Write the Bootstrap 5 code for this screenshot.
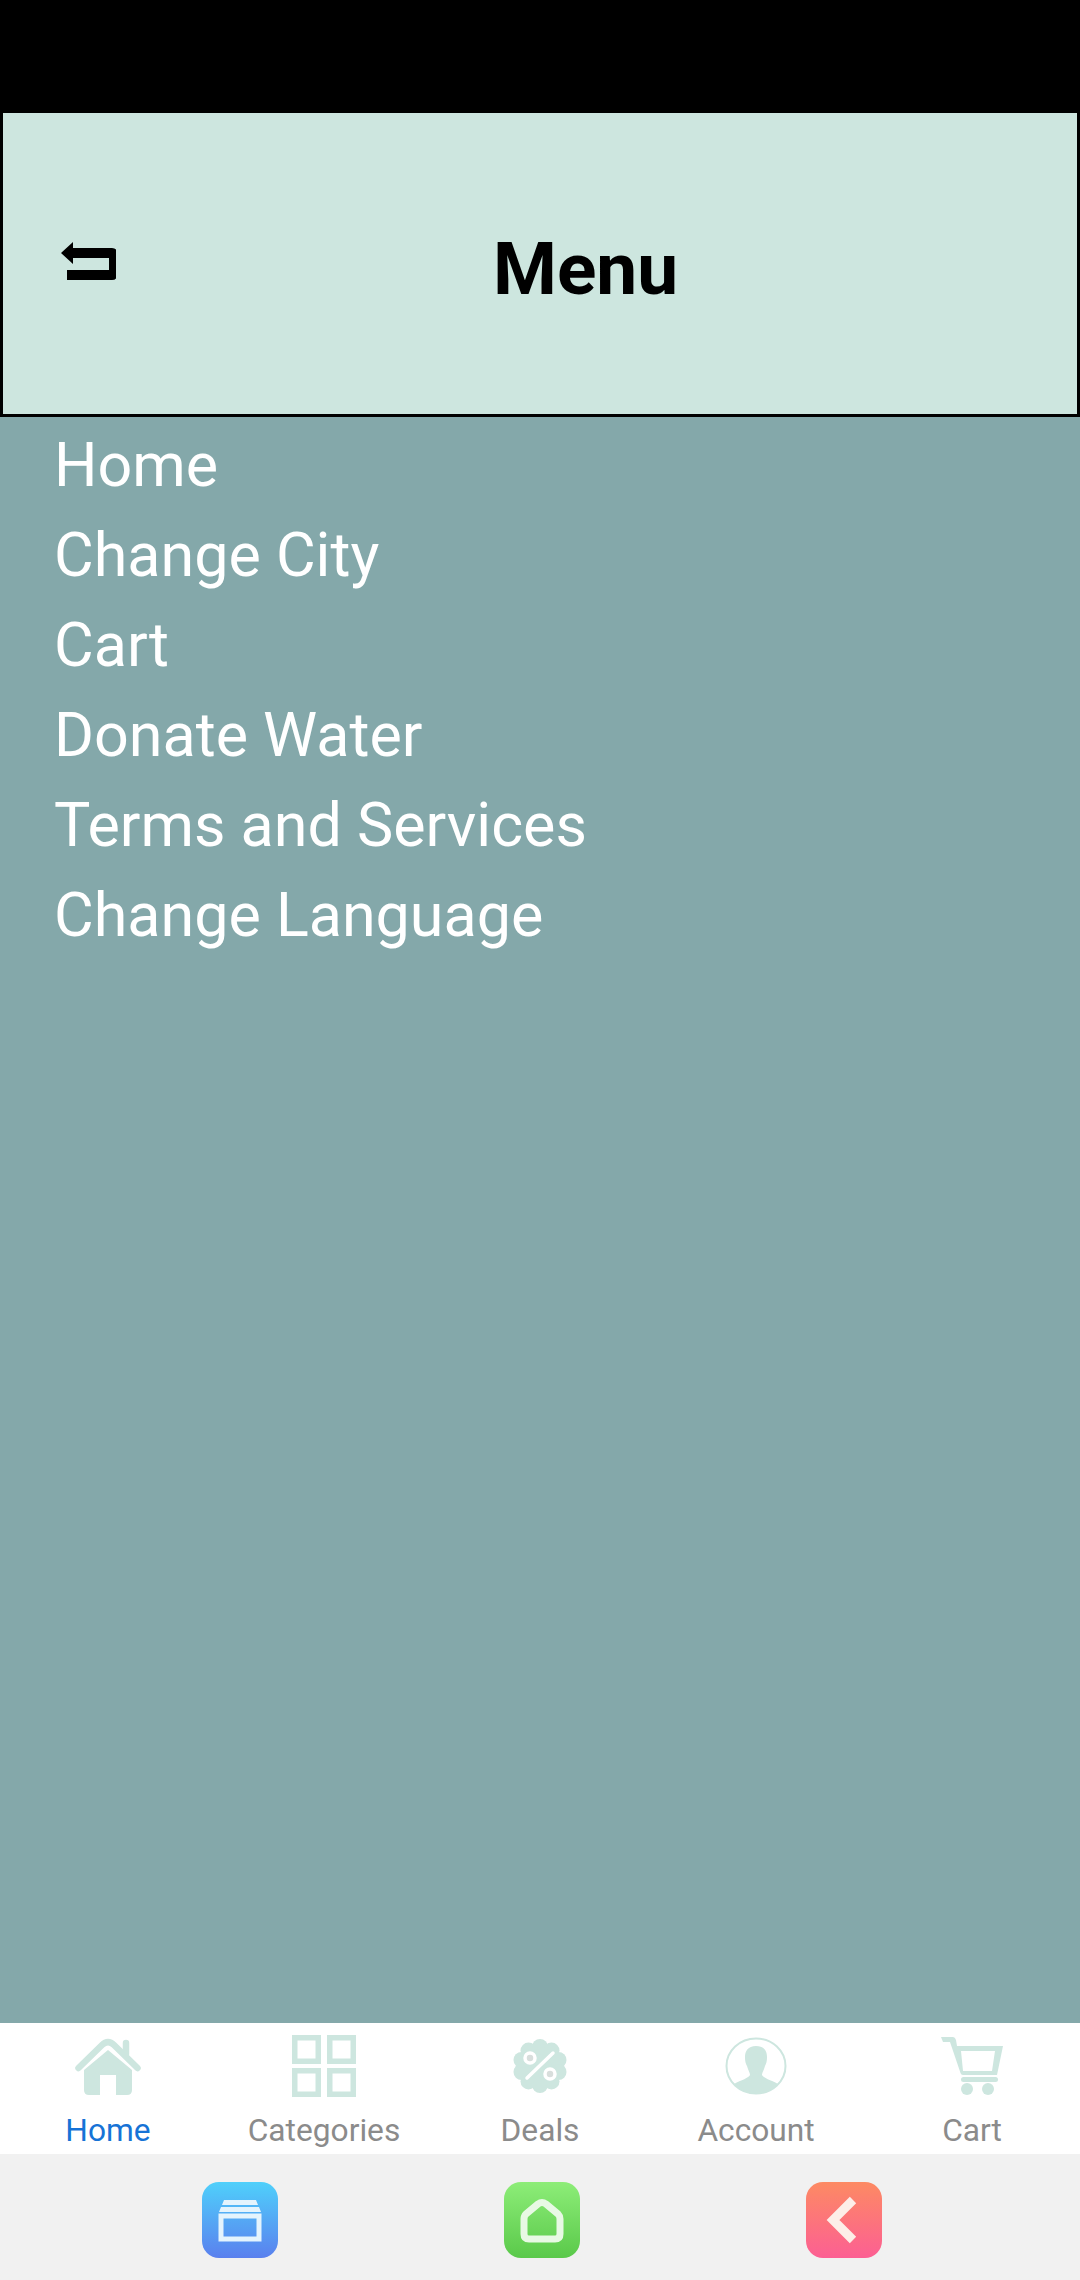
<!DOCTYPE html>
<html lang="en">
<head>
<meta charset="utf-8">
<title>Menu</title>
<link href="https://cdn.jsdelivr.net/npm/bootstrap@5.3.0/dist/css/bootstrap.min.css" rel="stylesheet">
<style>
html,body{height:2280px;margin:0;overflow:hidden}
body{font-family:Roboto,"Liberation Sans",sans-serif;background:#84a8aa}
.screen-wrap{height:2280px}
.status-strip{height:113px;background:#000;flex:none}
.menu-head{height:304px;flex:none;background:#cde6df;border:3px solid #000;border-top:0;padding-left:55px;padding-top:4px}
.back-ico{width:58px;height:40px;margin-top:-7px;flex:none;display:block}
.menu-title{font-size:73px;font-weight:700;line-height:1;color:#000;margin:0 0 0 377px;padding-top:7px}
.menu-body{background:#84a8aa;padding:3px 0 0 54px;flex:1 1 auto;min-height:0}
.menu-link{display:block;color:#fff;font-size:61px;line-height:90px;text-decoration:none;height:90px}
.tab-bar{height:131px;flex:none;background:#fff}
.tab-item{width:216px;flex:none;text-decoration:none;color:#8b8b8b;font-size:31.7px;line-height:36px}
.tab-item.on{color:#1673d6}
.tab-ico{height:62px;margin-top:12px;margin-bottom:16px;display:flex;align-items:center;justify-content:center}
.tab-ico svg{display:block}
.sys-bar{height:126px;flex:none;background:#f1f1f1;gap:226px;padding-top:28px;padding-left:3px}
.sys-btn{width:76px;height:76px;border-radius:17px;display:block;flex:none}
.grad-blue{background:linear-gradient(#4fd0fb,#5a80ee)}
.grad-green{background:linear-gradient(#8ded78,#5ac94a)}
.grad-red{background:linear-gradient(#fd8a63,#fc5f93)}
</style>
</head>
<body>
<div class="screen-wrap d-flex flex-column">
  <div class="status-strip"></div>
  <header class="menu-head d-flex align-items-center">
    <svg class="back-ico" viewBox="0 0 58 40" aria-label="Back">
      <path fill="#000" d="M3 11 15 0V6H54Q59 6 59 11V33Q59 38 54 38H9V28H51V16H15V22Z"/>
    </svg>
    <h1 class="menu-title">Menu</h1>
  </header>
  <nav class="menu-body">
    <a class="menu-link" href="#">Home</a>
    <a class="menu-link" href="#">Change City</a>
    <a class="menu-link" href="#">Cart</a>
    <a class="menu-link" href="#">Donate Water</a>
    <a class="menu-link" href="#">Terms and Services</a>
    <a class="menu-link" href="#">Change Language</a>
  </nav>
  <div class="tab-bar d-flex">
    <a class="tab-item on text-center" href="#">
      <div class="tab-ico">
        <svg width="66" height="58" viewBox="0 0 66 58"><path fill="#cde6df" d="M33 13 9 33V53Q9 58 14 58H25V38H41V58H52Q57 58 57 53V33Z"/><path fill="none" stroke="#cde6df" stroke-width="6.5" stroke-linecap="round" stroke-linejoin="round" d="M3.500 31 27 8Q33 2 39 8L62.500 31"/><path fill="none" stroke="#cde6df" stroke-width="6.500" stroke-linecap="round" d="M51 6V17"/></svg>
      </div>Home</a>
    <a class="tab-item text-center" href="#">
      <div class="tab-ico">
        <svg width="64" height="62" viewBox="0 0 64 62"><g fill="none" stroke="#cde6df" stroke-width="5.500"><rect x="2.750" y="2.750" width="23.500" height="23.500"/><rect x="37.750" y="2.750" width="23.500" height="23.500"/><rect x="2.750" y="35.750" width="23.500" height="23.500"/><rect x="37.750" y="35.750" width="23.500" height="23.500"/></g></svg>
      </div>Categories</a>
    <a class="tab-item text-center" href="#">
      <div class="tab-ico">
        <svg width="56" height="54" viewBox="0 0 56 54"><g fill="#cde6df"><circle cx="28" cy="27" r="22"/><circle cx="28" cy="8" r="8"/><circle cx="39.500" cy="11.600" r="8"/><circle cx="46.500" cy="21" r="8"/><circle cx="46.500" cy="33" r="8"/><circle cx="39.500" cy="42.400" r="8"/><circle cx="28" cy="46" r="8"/><circle cx="16.500" cy="42.400" r="8"/><circle cx="9.500" cy="33" r="8"/><circle cx="9.500" cy="21" r="8"/><circle cx="16.500" cy="11.600" r="8"/></g><path fill="none" stroke="#fff" stroke-width="3.500" stroke-linecap="round" d="M15 39 41 14"/><circle cx="18" cy="19" r="5" fill="#d8dedc" stroke="#fff" stroke-width="3.500"/><circle cx="38" cy="35" r="5" fill="#d8dedc" stroke="#fff" stroke-width="3.500"/></svg>
      </div>Deals</a>
    <a class="tab-item text-center" href="#">
      <div class="tab-ico">
        <svg width="62" height="58" viewBox="0 0 62 58"><ellipse cx="31" cy="29" rx="29.500" ry="27.500" fill="none" stroke="#cde6df" stroke-width="2"/><path fill="#cde6df" d="M31 9C39 9 42 14 42 20 42 25 41 27 40 29 39 33 37 36 37 38 38 41 46 43 53 47 47 53 39 57 31 57S15 53 9 47C16 43 24 41 25 38 25 36 23 33 22 29 21 27 20 25 20 20 20 14 23 9 31 9Z"/></svg>
      </div>Account</a>
    <a class="tab-item text-center" href="#">
      <div class="tab-ico">
        <svg width="62" height="58" viewBox="0 0 62 58"><path fill="#cde6df" fill-rule="evenodd" d="M0 0H12Q14 0 15 3L16 9H62L56 38H22Q20 38 19.500 36L9 5H2ZM20 14 22 34H51L54 14Z"/><rect x="20" y="40" width="37" height="5" rx="2.500" fill="#cde6df"/><circle cx="26" cy="52" r="6" fill="#cde6df"/><circle cx="47" cy="52" r="6" fill="#cde6df"/></svg>
      </div>Cart</a>
  </div>
  <div class="sys-bar d-flex justify-content-center">
    <a class="sys-btn grad-blue" href="#" aria-label="Recent">
      <svg width="76" height="76" viewBox="0 0 76 76"><path fill="#e4f4fd" d="M22 18H54L56 23H20Z"/><path fill="#e4f4fd" d="M19 25H57L59 30H17Z"/><rect x="19" y="34" width="38" height="23" fill="none" stroke="#e4f4fd" stroke-width="5"/></svg>
    </a>
    <a class="sys-btn grad-green" href="#" aria-label="Home">
      <svg width="76" height="76" viewBox="0 0 76 76"><path fill="none" stroke="#e8f9e4" stroke-width="7" stroke-linejoin="round" d="M34 22Q38 19 42 22L54 32Q56 34 56 37V52Q56 57 51 57H25Q20 57 20 52V37Q20 34 22 32Z"/></svg>
    </a>
    <a class="sys-btn grad-red" href="#" aria-label="Back">
      <svg width="76" height="76" viewBox="0 0 76 76"><path fill="none" stroke="#fdeee8" stroke-width="9" stroke-linejoin="miter" d="M47 18 27 38 47 58"/></svg>
    </a>
  </div>
</div>
<script src="https://cdn.jsdelivr.net/npm/bootstrap@5.3.0/dist/js/bootstrap.bundle.min.js"></script>
</body>
</html>
